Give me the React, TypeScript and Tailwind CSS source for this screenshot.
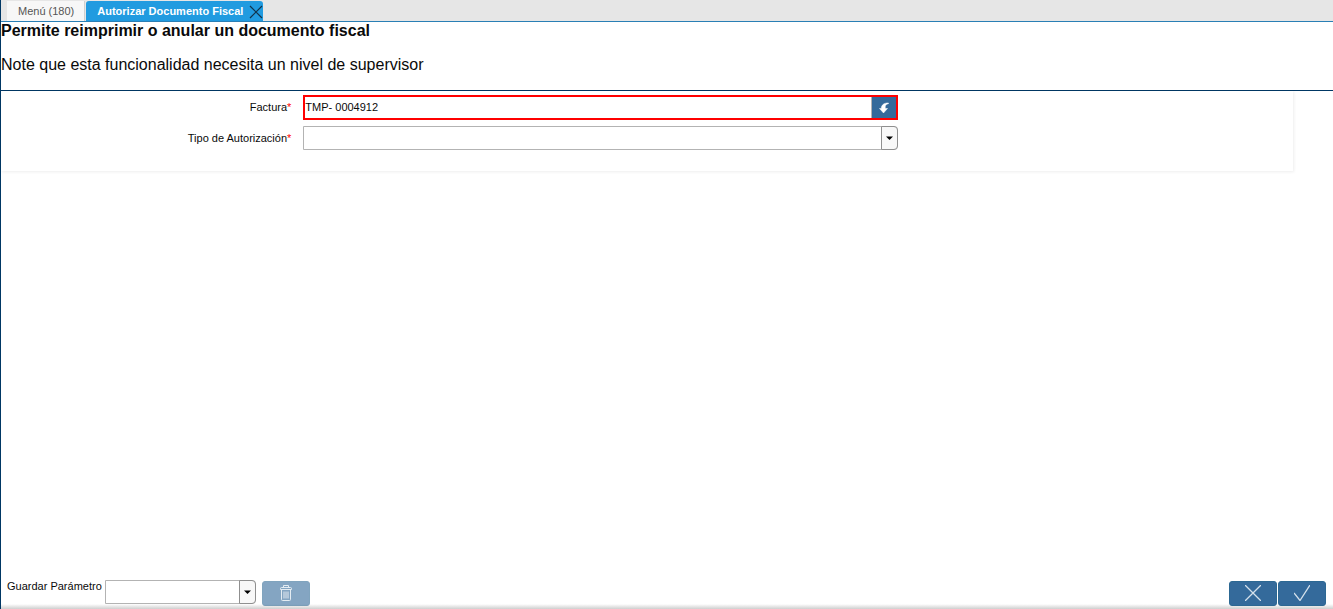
import React from "react";

type ComboProps = { id: string; className: string };

function Combo({ id, className }: ComboProps) {
  return (
    <div className={`relative h-6 ${className}`}>
      <select
        id={id}
        className="block h-6 w-full appearance-none rounded-r border border-[#b3b3b3] bg-white pl-1 pr-5 text-[11px]"
      >
        <option value=""></option>
      </select>
      <span className="pointer-events-none absolute inset-y-0 right-0 flex w-[17px] items-center justify-center rounded-r border border-[#8f8f8f] bg-[#f8f8f8]">
        <svg width="7" height="4" viewBox="0 0 7 4" aria-hidden="true">
          <path d="M0 0.5h7L3.5 4z" fill="#000" />
        </svg>
      </span>
    </div>
  );
}

type ActionProps = { label: string; disabled?: boolean; children: React.ReactNode };

function ActionButton({ label, disabled, children }: ActionProps) {
  return (
    <button
      type="button"
      aria-label={label}
      disabled={disabled}
      className="flex h-[25px] w-12 items-start justify-center rounded-[3px] border border-[#2c6893] bg-[#346a9b] pt-[3px] text-[#d3e0eb] disabled:opacity-60"
    >
      {children}
    </button>
  );
}

function Required() {
  return <span className="text-[#ff0000]">*</span>;
}

export default function App() {
  return (
    <div className="flex min-h-screen flex-col border-l border-[#003764] bg-white font-['Liberation_Sans',Arial,sans-serif] text-[11px] text-[#0a0a0a]">
      <nav className="flex h-[22px] items-end border-b border-[#2a7fb5] bg-[#e6e6e6] pl-1.5">
        <button type="button" className="mr-px h-5 border-r border-[#d0d0d0] bg-[#f7f7f7] pl-[11px] pr-2.5 text-[#555555]">
          Menú (180)
        </button>
        <div className="flex h-5 items-center rounded-t-[3px] bg-[#219be0] pl-[11px] text-white">
          <button type="button" className="font-bold">
            Autorizar Documento Fiscal
          </button>
          <button type="button" aria-label="Cerrar" className="ml-1.5 mt-0.5">
            <svg width="14" height="14" viewBox="0 0 14 14" fill="none" stroke="#12334a" strokeWidth="1.2" aria-hidden="true">
              <path d="M1 1l12 12M13 1L1 13" />
            </svg>
          </button>
        </div>
      </nav>

      <header className="border-b border-[#003764] pb-4 text-base leading-[18px]">
        <h1 className="font-bold">Permite reimprimir o anular un documento fiscal</h1>
        <p className="mt-4">Note que esta funcionalidad necesita un nivel de supervisor</p>
      </header>

      <main className="flex-1">
        <form className="flex w-[97%] flex-col gap-1.5 pb-[21px] pt-1 shadow-[1px_1px_3px_rgba(0,0,0,0.07)]">
          <div className="flex items-center">
            <label htmlFor="factura" className="w-[23.4%] pr-3 text-right">
              Factura
              <Required />
            </label>
            <div className="flex h-[25px] w-[46%] border-2 border-[#ff0000]">
              <input
                id="factura"
                type="text"
                defaultValue="TMP- 0004912"
                className="min-w-0 flex-1 border-r border-[#b3b3b3] outline-none"
              />
              <button type="button" aria-label="Buscar factura" className="flex w-6 items-center justify-center bg-[#346a9b]">
                <svg width="12" height="12" viewBox="0 0 12 12" aria-hidden="true">
                  <path d="M10.500 1C6 0.800 3.300 3 3.300 6.500H1.500L5.500 11L9.500 6.500H7.300C6.800 4 7.800 2.300 10.500 1.600Z" fill="#fff" stroke="#fff" strokeWidth="0.500" />
                </svg>
              </button>
            </div>
          </div>
          <div className="flex items-center">
            <label htmlFor="tipo" className="w-[23.4%] pr-3 text-right">
              Tipo de Autorización
              <Required />
            </label>
            <Combo id="tipo" className="w-[46%]" />
          </div>
        </form>
      </main>

      <footer className="flex h-[29px] items-start bg-linear-to-t from-[#cfcfcf] to-white to-[5px] pl-1.5 pr-[7px]">
        <label htmlFor="guardar" className="mr-[3px] leading-[13px]">
          Guardar Parámetro
        </label>
        <Combo id="guardar" className="mr-1.5 w-[151px]" />
        <div className="mt-px">
          <ActionButton label="Eliminar" disabled>
            <svg width="14" height="17" viewBox="0 0 14 17" fill="none" stroke="currentColor" aria-hidden="true">
              <path d="M1.500 4.500V3.500Q1.500 2.500 2.500 2.500H11.500Q12.500 2.500 12.500 3.500V4.500ZM4.500 2.500V0.500H9.500V2.500M2.500 5V14.500Q2.500 15.500 3.500 15.500H10.500Q11.500 15.500 11.500 14.500V5M5 6.500V13.500M7 6.500V13.500M9 6.500V13.500" />
            </svg>
          </ActionButton>
        </div>
        <div className="ml-auto mt-px flex gap-px">
          <ActionButton label="Cancelar">
            <svg width="16" height="16" viewBox="0 0 16 16" fill="none" stroke="currentColor" strokeWidth="1.300" aria-hidden="true">
              <path d="M0 0l16 16M16 0L0 16" />
            </svg>
          </ActionButton>
          <ActionButton label="Aceptar">
            <svg width="16" height="16" viewBox="0 0 16 16" fill="none" stroke="currentColor" strokeWidth="1.300" aria-hidden="true">
              <path d="M0 8l6 7.500L16 0" />
            </svg>
          </ActionButton>
        </div>
      </footer>
    </div>
  );
}
